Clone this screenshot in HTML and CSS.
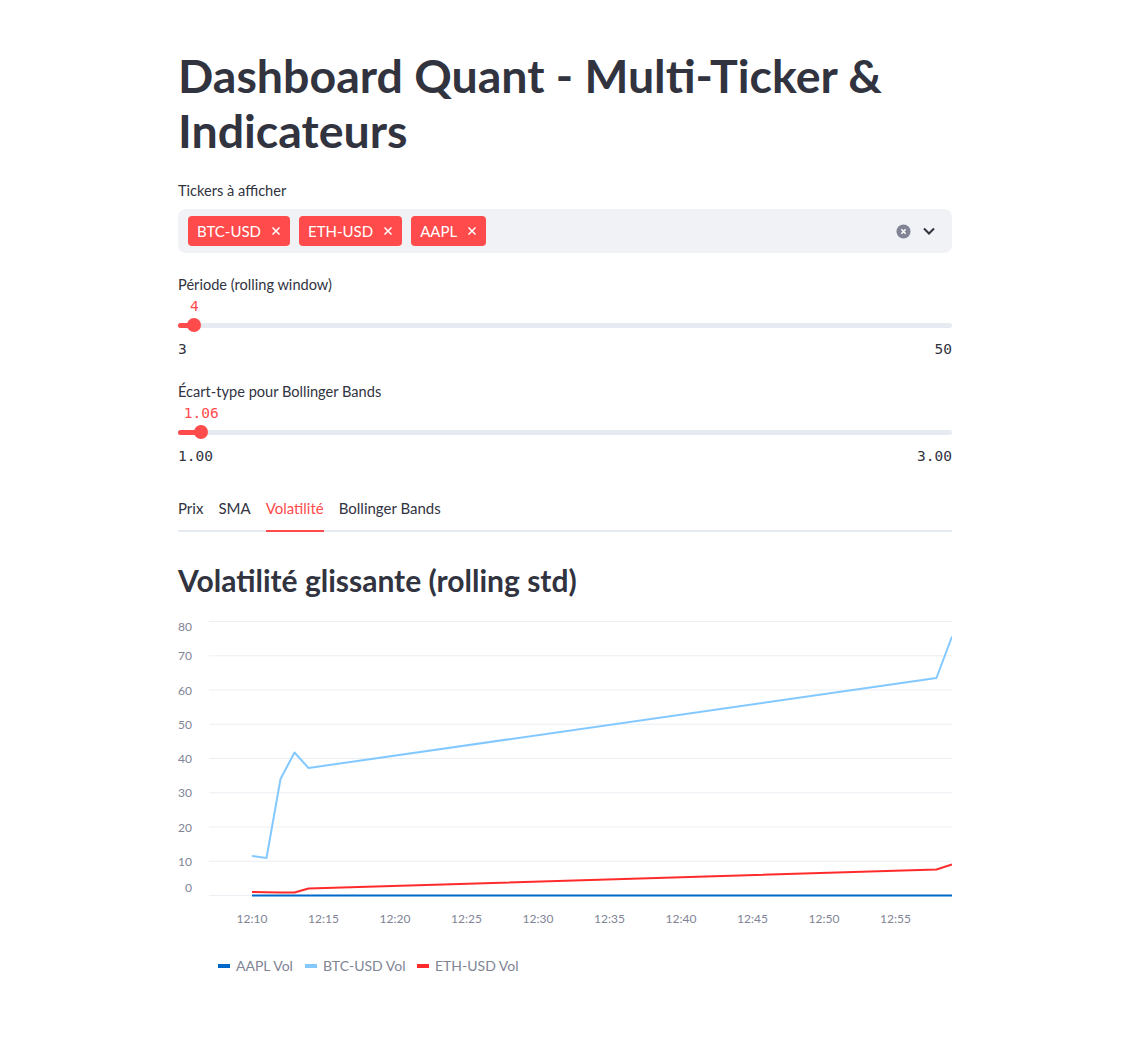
FILE: index.html
```html
<!DOCTYPE html>
<html lang="fr">
<head>
<meta charset="utf-8">
<title>Dashboard Quant</title>
<link rel="stylesheet" href="styles.css">
</head>
<body>
<main class="page">
  <h1 class="title">Dashboard Quant - Multi-Ticker &amp; Indicateurs</h1>

  <section class="field field-multi">
    <div class="field-label">Tickers à afficher</div>
    <div class="multiselect">
      <div class="tags">
        <span class="tag">BTC-USD<svg class="tag-x" viewBox="0 0 10 10"><path d="M1.5 1.5l7 7M8.5 1.5l-7 7"/></svg></span>
        <span class="tag">ETH-USD<svg class="tag-x" viewBox="0 0 10 10"><path d="M1.5 1.5l7 7M8.5 1.5l-7 7"/></svg></span>
        <span class="tag">AAPL<svg class="tag-x" viewBox="0 0 10 10"><path d="M1.5 1.5l7 7M8.5 1.5l-7 7"/></svg></span>
      </div>
      <div class="ms-controls">
        <svg class="ms-clear" viewBox="0 0 16 16"><circle cx="8" cy="8" r="7.5"/><path d="M5.7 5.7l4.6 4.6M10.3 5.7l-4.6 4.6"/></svg>
        <svg class="ms-chevron" viewBox="0 0 16 16"><path d="M3 5.5l5 5 5-5"/></svg>
      </div>
    </div>
  </section>

  <section class="field slider">
    <div class="field-label">Période (rolling window)</div>
    <div class="slider-body" style="--pos: 2.13%;">
      <div class="slider-value-row"><span class="slider-value">4</span></div>
      <div class="slider-track-row">
        <div class="slider-track"><div class="slider-fill"></div><div class="slider-thumb"></div></div>
      </div>
      <div class="slider-ticks"><span>3</span><span>50</span></div>
    </div>
  </section>

  <section class="field slider">
    <div class="field-label">Écart-type pour Bollinger Bands</div>
    <div class="slider-body" style="--pos: 3%;">
      <div class="slider-value-row"><span class="slider-value">1.06</span></div>
      <div class="slider-track-row">
        <div class="slider-track"><div class="slider-fill"></div><div class="slider-thumb"></div></div>
      </div>
      <div class="slider-ticks"><span>1.00</span><span>3.00</span></div>
    </div>
  </section>

  <nav class="tabs">
    <span class="tab">Prix</span>
    <span class="tab">SMA</span>
    <span class="tab tab-active">Volatilité</span>
    <span class="tab">Bollinger Bands</span>
  </nav>

  <h2 class="subtitle">Volatilité glissante (rolling std)</h2>

  <div class="chart">
    <svg class="chart-svg" width="774" height="380" viewBox="0 0 774 380">
      <g class="grid">
        <line x1="31" y1="11.5" x2="774" y2="11.5"/>
        <line x1="31" y1="45.75" x2="774" y2="45.75"/>
        <line x1="31" y1="80" x2="774" y2="80"/>
        <line x1="31" y1="114.25" x2="774" y2="114.25"/>
        <line x1="31" y1="148.5" x2="774" y2="148.5"/>
        <line x1="31" y1="182.75" x2="774" y2="182.75"/>
        <line x1="31" y1="217" x2="774" y2="217"/>
        <line x1="31" y1="251.25" x2="774" y2="251.25"/>
        <line x1="31" y1="285.5" x2="774" y2="285.5"/>
      </g>
      <g class="ylabels">
        <text x="14" y="21">80</text>
        <text x="14" y="50">70</text>
        <text x="14" y="84.5">60</text>
        <text x="14" y="118.5">50</text>
        <text x="14" y="153">40</text>
        <text x="14" y="187">30</text>
        <text x="14" y="221.5">20</text>
        <text x="14" y="255.5">10</text>
        <text x="14" y="282">0</text>
      </g>
      <g class="xlabels">
        <text x="74" y="313">12:10</text>
        <text x="145.5" y="313">12:15</text>
        <text x="217" y="313">12:20</text>
        <text x="288.5" y="313">12:25</text>
        <text x="360" y="313">12:30</text>
        <text x="431.5" y="313">12:35</text>
        <text x="503" y="313">12:40</text>
        <text x="574.5" y="313">12:45</text>
        <text x="646" y="313">12:50</text>
        <text x="717.5" y="313">12:55</text>
      </g>
      <polyline class="s-btc" points="74,246 88.5,248 102.5,169 116.5,142.5 130.5,158 758.5,68 774,26.5"/>
      <polyline class="s-eth" points="74,282 88,282.3 102,282.5 116.5,282.5 130.5,278.5 758.5,259.5 774,254.5"/>
      <polyline class="s-aapl" points="74,285.5 774,285.5"/>
      <g class="legend">
        <rect class="sw-aapl" x="40" y="354" width="12" height="4"/>
        <text x="58" y="361">AAPL Vol</text>
        <rect class="sw-btc" x="127" y="354" width="12" height="4"/>
        <text x="145" y="361">BTC-USD Vol</text>
        <rect class="sw-eth" x="239" y="354" width="12" height="4"/>
        <text x="257" y="361">ETH-USD Vol</text>
      </g>
    </svg>
  </div>
</main>
</body>
</html>
```

FILE: styles.css
```css
* { box-sizing: border-box; margin: 0; padding: 0; }

body {
  font-family: Lato, "Noto Sans", sans-serif;
  color: #31333f;
  background: #ffffff;
}

.page {
  width: 780px;
  margin: 0 auto;
  padding: 48px 0 60px 6px;
}

.title {
  font-size: 46.5px;
  font-weight: 700;
  line-height: 55px;
  color: #31333f;
}

.field-label {
  font-size: 14.6px;
  line-height: 21px;
  color: #31333f;
}

.field-multi { margin-top: 22px; }

.multiselect {
  margin-top: 8px;
  height: 44px;
  background: #f0f2f6;
  border-radius: 8px;
  display: flex;
  align-items: center;
  justify-content: space-between;
  padding: 0 15px 0 10px;
}

.tags { display: flex; gap: 9px; }

.tag {
  display: flex;
  align-items: center;
  height: 30px;
  padding: 0 9px 0 9px;
  background: #ff4b4b;
  color: #ffffff;
  border-radius: 4px;
  font-size: 15px;
  gap: 10px;
}

.tag-x { width: 10px; height: 10px; }
.tag-x path { stroke: #ffffff; stroke-width: 1.5; fill: none; }

.ms-controls { display: flex; align-items: center; gap: 10px; }
.ms-clear { width: 15px; height: 15px; }
.ms-clear circle { fill: #808495; }
.ms-clear path { stroke: #ffffff; stroke-width: 1.6; fill: none; }
.ms-chevron { width: 16px; height: 16px; }
.ms-chevron path { stroke: #31333f; stroke-width: 2; fill: none; }

.slider { margin-top: 21px; }
.slider + .slider { margin-top: 21px; }

.slider-body { --pos: 0%; }

.slider-value-row { position: relative; height: 21px; }
.slider-value {
  position: absolute;
  left: var(--pos);
  top: 1px;
  transform: translateX(-50%);
  font-family: "DejaVu Sans Mono", "Liberation Mono", monospace;
  font-size: 14.5px;
  line-height: 21px;
  color: #ff4b4b;
}

.slider-track-row { height: 16px; display: flex; align-items: center; margin-top: 1px; }
.slider-track {
  position: relative;
  width: 100%;
  height: 5px;
  background: #e6eaf1;
  border-radius: 3px;
}
.slider-fill {
  position: absolute;
  left: 0; top: 0; bottom: 0;
  width: var(--pos);
  background: #ff4b4b;
  border-radius: 3px;
}
.slider-thumb {
  position: absolute;
  left: var(--pos);
  top: 50%;
  width: 14px;
  height: 14px;
  margin: -7px 0 0 -7px;
  border-radius: 50%;
  background: #ff4b4b;
}

.slider-ticks {
  display: flex;
  justify-content: space-between;
  margin-top: 6px;
  font-family: "DejaVu Sans Mono", "Liberation Mono", monospace;
  font-size: 14.5px;
  line-height: 21px;
  color: #31333f;
}

.tabs {
  margin-top: 22px;
  display: flex;
  gap: 15px;
  border-bottom: 2px solid #e6eaf1;
}
.tab {
  font-size: 15px;
  line-height: 20px;
  padding: 9px 0 12px;
  color: #31333f;
  margin-bottom: -2px;
  border-bottom: 2px solid transparent;
}
.tab-active { color: #ff4b4b; border-bottom-color: #ff4b4b; }

.subtitle {
  margin-top: 30px;
  font-size: 30px;
  font-weight: 700;
  line-height: 36px;
  color: #31333f;
}

.chart { margin-top: 12px; }
.chart-svg { display: block; }

.grid line { stroke: #eceff4; stroke-width: 1; }
.ylabels text {
  font-family: Lato, "Noto Sans", sans-serif;
  font-size: 12px;
  fill: #808495;
  text-anchor: end;
}
.xlabels text {
  font-family: Lato, "Noto Sans", sans-serif;
  font-size: 12px;
  fill: #808495;
  text-anchor: middle;
}
.legend text {
  font-family: Lato, "Noto Sans", sans-serif;
  font-size: 14px;
  fill: #808495;
}
.s-btc, .s-eth, .s-aapl { fill: none; stroke-width: 2; stroke-linejoin: round; }
.s-btc { stroke: #83c9ff; }
.s-eth { stroke: #ff2b2b; }
.s-aapl { stroke: #0068c9; }
.sw-aapl { fill: #0068c9; }
.sw-btc { fill: #83c9ff; }
.sw-eth { fill: #ff2b2b; }
```
